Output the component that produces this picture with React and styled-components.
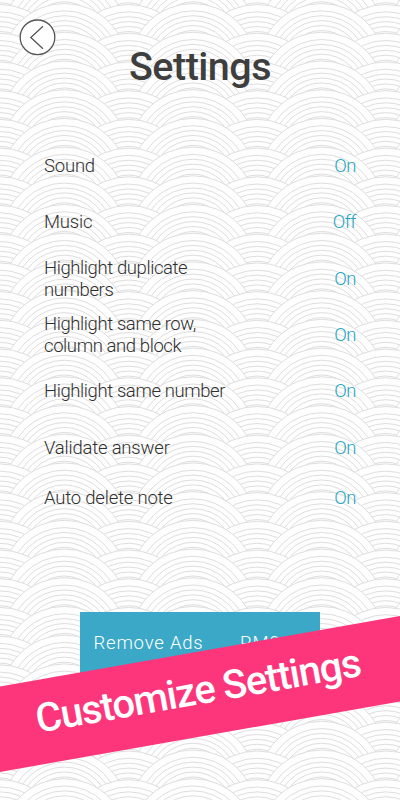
import React from "react"
import styled, { createGlobalStyle } from "styled-components"

const GlobalStyle = createGlobalStyle`
  body {
    margin: 0;
    background: #fefefe;
  }

  * {
    box-sizing: border-box;
  }
`

const Screen = styled.main`
  position: relative;
  width: 400px;
  height: 800px;
  overflow: hidden;
  font-family: Roboto, "Open Sans", sans-serif;
  color: #3e3e3e;
`

const Backdrop = styled.svg`
  position: absolute;
  inset: 0;
  z-index: -1;
`

const Header = styled.header`
  height: 138px;
  padding: 19px 19px 0;
`

const BackButton = styled.button`
  display: block;
  width: 37px;
  height: 37px;
  padding: 0;
  border: 0;
  background: none;
`

const Title = styled.h1`
  margin: -15px 0 0;
  font-size: 39.5px;
  line-height: 52px;
  font-weight: 500;
  letter-spacing: -0.5px;
  text-align: center;
`

const List = styled.ul`
  margin: 0;
  padding: 0 44px;
  list-style: none;
`

const Row = styled.li`
  display: flex;
  align-items: center;
  justify-content: space-between;
  height: 56.3px;
  font-size: 18.5px;
  line-height: 22px;
  font-weight: 300;

  &:last-child {
    height: 44px;
  }
`

const Label = styled.span`
  color: #2f2f2f;
  letter-spacing: ${({ $tight }) => ($tight ? "-0.4px" : "-0.2px")};
  white-space: pre-line;
`

const Value = styled.span`
  color: #1fa3c2;
  letter-spacing: -0.5px;
`

const RemoveAds = styled.button`
  display: flex;
  align-items: center;
  width: 240px;
  height: 62px;
  margin: 92.7px 0 0 79.5px;
  padding: 0 0 0 14px;
  border: 0;
  background: #3aa8c6;
  color: #fff;
  font-family: inherit;
  font-size: 18.5px;
  font-weight: 300;
  letter-spacing: 0.8px;
`

const Price = styled.span`
  margin-left: 36.5px;
`

const Ribbon = styled.div`
  position: absolute;
  left: -40px;
  top: 652px;
  display: flex;
  align-items: center;
  justify-content: center;
  width: 480px;
  height: 84px;
  padding: 0 3px 7px 0;
  background: #fd367b;
  color: #fff;
  font-size: 40px;
  line-height: 48px;
  font-weight: 500;
  letter-spacing: -1.1px;
  white-space: nowrap;
  transform: rotate(-10deg);
`

const settings = [
  { label: "Sound", value: "On" },
  { label: "Music", value: "Off" },
  { label: "Highlight duplicate\nnumbers", value: "On", tight: true },
  { label: "Highlight same row,\ncolumn and block", value: "On", tight: true },
  { label: "Highlight same number", value: "On", tight: true },
  { label: "Validate answer", value: "On" },
  { label: "Auto delete note", value: "On" },
]

const WAVE_WIDTH = 128.6
const WAVE_STEP = 28.71
const RADII = [63, 55.7, 50.8, 45.9, 41, 36]

// Every row is painted over the one above it, so only the crests stay visible
function Waves() {
  const waves = []
  for (let row = -2; row < 30; row++) {
    const y = 3.5 + row * WAVE_STEP + 63
    for (let col = 0; col < 4; col++) {
      waves.push({ x: col * WAVE_WIDTH, y: y + 1 })
    }
    for (let col = 0; col < 4; col++) {
      waves.push({ x: 64.4 + col * WAVE_WIDTH, y })
    }
  }

  return (
    <Backdrop width="400" height="800" viewBox="0 0 400 800">
      <defs>
        <g id="wave" fill="#fefefe" stroke="#dedede" strokeWidth="1">
          {RADII.map(r => (
            <circle key={r} r={r} />
          ))}
        </g>
      </defs>
      {waves.map(({ x, y }) => (
        <use key={`${x}-${y}`} href="#wave" x={x} y={y} />
      ))}
    </Backdrop>
  )
}

export default function App() {
  return (
    <>
      <GlobalStyle />
      <Screen>
        <Waves />
        <Header>
          <BackButton aria-label="Back">
            <svg width="37" height="37" fill="none" stroke="#555">
              <circle cx="18.5" cy="18.3" r="17.3" fill="#fff" strokeWidth="1.3" />
              <path d="M24 7.3 11.8 18.5 24 29.8" strokeWidth="1.3" />
            </svg>
          </BackButton>
          <Title>Settings</Title>
        </Header>
        <List>
          {settings.map(({ label, value, tight }) => (
            <Row key={label}>
              <Label $tight={tight}>{label}</Label>
              <Value>{value}</Value>
            </Row>
          ))}
        </List>
        <RemoveAds>
          <span>Remove Ads</span>
          <Price>RM9.90</Price>
        </RemoveAds>
        <Ribbon>Customize Settings</Ribbon>
      </Screen>
    </>
  )
}
